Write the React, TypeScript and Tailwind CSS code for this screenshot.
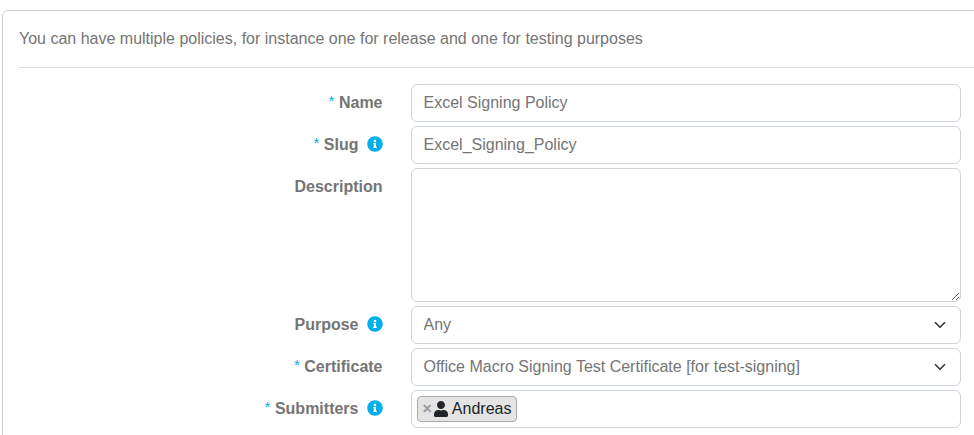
import type { ReactNode } from 'react';
import { FaInfoCircle, FaUser } from 'react-icons/fa';

const control =
  'block w-[550px] h-[38px] rounded-md border border-[#ced4da] bg-white px-[11.5px] text-base leading-6 text-[#757575] outline-none';

function Row({
  label,
  required,
  info,
  children,
}: {
  label: string;
  required?: boolean;
  info?: boolean;
  children: ReactNode;
}) {
  return (
    <div className="flex items-start">
      <label className="flex w-[363.5px] shrink-0 items-center justify-end pt-[7px] text-base leading-6 font-bold text-[#757575]">
        {required && (
          <span className="mr-[4.5px] -mt-[4px] text-[15px] leading-5 font-normal text-[#00b0ea]">*</span>
        )}
        <span>{label}</span>
        {info && <FaInfoCircle className="-mt-[1.5px] ml-2 size-4 text-[#00b0ea]" />}
      </label>
      <div className="ml-[28.5px]">{children}</div>
    </div>
  );
}

function SelectBox({ value }: { value: string }) {
  return (
    <div className="relative">
      <select className={control + ' appearance-none'} defaultValue={value}>
        <option>{value}</option>
      </select>
      <svg
        viewBox="0 0 16 16"
        className="pointer-events-none absolute top-[13px] right-[13px] h-3 w-4"
        fill="none"
        stroke="#343a40"
        strokeWidth="2.3"
        strokeLinecap="round"
        strokeLinejoin="round"
      >
        <path d="m2 5 6 6 6-6" />
      </svg>
    </div>
  );
}

export default function App() {
  return (
    <div className="h-[435px] overflow-hidden bg-white pt-[10px] pl-[2px] font-['Liberation_Sans',Arial,sans-serif]">
      <div className="h-[500px] w-[1000px] rounded-md border border-[#cccdce] p-4">
        <p className="text-base leading-6 text-[#757575]">
          You can have multiple policies, for instance one for release and one for testing purposes
        </p>
        <hr className="my-4 border-t border-[#dcdddf]" />
        <form className="flex flex-col gap-1">
          <Row label="Name" required>
            <input className={control} defaultValue="Excel Signing Policy" />
          </Row>
          <Row label="Slug" required info>
            <input className={control} defaultValue="Excel_Signing_Policy" />
          </Row>
          <Row label="Description">
            <textarea className="block h-[134px] w-[550px] resize rounded-md border border-[#ced4da] bg-white px-3 py-1.5 text-base outline-none" />
          </Row>
          <Row label="Purpose" info>
            <SelectBox value="Any" />
          </Row>
          <Row label="Certificate" required>
            <SelectBox value="Office Macro Signing Test Certificate [for test-signing]" />
          </Row>
          <Row label="Submitters" required info>
            <div className="flex h-[38px] w-[550px] items-center rounded-md border border-[#ced4da] pl-[5px]">
              <span className="flex h-[26px] w-[100px] items-center rounded-[4px] border border-[#aaa] bg-[#e4e4e4] pl-[4.5px] text-base leading-6 text-[#212529]">
                <span className="mr-[2px] font-bold text-[#999]">×</span>
                <FaUser className="-mt-[1px] mr-1 h-4 w-[14px]" />
                <span>Andreas</span>
              </span>
            </div>
          </Row>
        </form>
      </div>
    </div>
  );
}
